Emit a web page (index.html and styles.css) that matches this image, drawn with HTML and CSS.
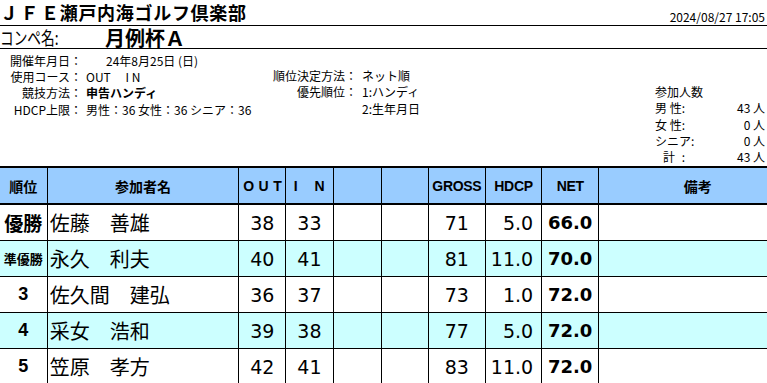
FILE: index.html
```html
<!DOCTYPE html>
<html lang="ja">
<head>
<meta charset="utf-8">
<title>JFE瀬戸内海ゴルフ倶楽部 月例杯A</title>
<link rel="stylesheet" href="styles.css">
</head>
<body>
<header class="title-row">
  <h1 class="club"><span class="wide">ＪＦ</span>Ｅ瀬戸内海ゴルフ倶楽部</h1>
  <div class="stamp">2024/08/27 17:05</div>
</header>
<div class="compe-row">
  <div class="compe-label"><span class="squeeze">コンペ名:</span></div>
  <div class="compe-name">月例杯Ａ</div>
</div>
<section class="info">
  <div class="info-left">
    <div class="line"><span class="lab">開催年月日：</span><span class="val date">24年8月25日 (日)</span></div>
    <div class="line"><span class="lab">使用コース：</span><span class="val">OUT　 I N</span></div>
    <div class="line"><span class="lab">競技方法：</span><span class="val strong">申告ハンディ</span></div>
    <div class="line"><span class="lab">HDCP上限：</span><span class="val">男性：36 女性：36 シニア：36</span></div>
  </div>
  <div class="info-mid">
    <div class="line"><span class="lab">順位決定方法：</span><span class="val">ネット順</span></div>
    <div class="line"><span class="lab">優先順位：</span><span class="val">1:ハンディ</span></div>
    <div class="line"><span class="lab"></span><span class="val">2:生年月日</span></div>
  </div>
  <div class="info-right">
    <div class="line">参加人数</div>
    <div class="line cnt"><span class="clab">男 性:</span><span class="num">43 人</span></div>
    <div class="line cnt"><span class="clab">女 性:</span><span class="num">0 人</span></div>
    <div class="line cnt"><span class="clab">シニア:</span><span class="num">0 人</span></div>
    <div class="line cnt"><span class="clab total">計 <span class="tcolon">:</span></span><span class="num">43 人</span></div>
  </div>
</section>
<table class="results">
  <colgroup>
    <col class="c-rank"><col class="c-name"><col class="c-sc"><col class="c-sc"><col class="c-blank1"><col class="c-sc">
    <col class="c-gross"><col class="c-hdcp"><col class="c-net"><col class="c-note">
  </colgroup>
  <thead>
    <tr>
      <th class="first">順位</th>
      <th>参加者名</th>
      <th class="lat out">OUT</th>
      <th class="lat in">I N</th>
      <th></th>
      <th></th>
      <th class="lat">GROSS</th>
      <th class="lat">HDCP</th>
      <th class="lat">NET</th>
      <th>備考</th>
    </tr>
  </thead>
  <tbody>
    <tr>
      <td class="first rank jp">優勝</td><td class="name">佐藤　善雄</td>
      <td class="n">38</td><td class="n">33</td><td></td><td></td>
      <td class="n">71</td><td class="n r">5.0</td><td class="n net">66.0</td><td></td>
    </tr>
    <tr class="alt">
      <td class="first rank jp small">準優勝</td><td class="name">永久　利夫</td>
      <td class="n">40</td><td class="n">41</td><td></td><td></td>
      <td class="n">81</td><td class="n r">11.0</td><td class="n net">70.0</td><td></td>
    </tr>
    <tr>
      <td class="first rank">3</td><td class="name">佐久間　建弘</td>
      <td class="n">36</td><td class="n">37</td><td></td><td></td>
      <td class="n">73</td><td class="n r">1.0</td><td class="n net">72.0</td><td></td>
    </tr>
    <tr class="alt">
      <td class="first rank">4</td><td class="name">采女　浩和</td>
      <td class="n">39</td><td class="n">38</td><td></td><td></td>
      <td class="n">77</td><td class="n r">5.0</td><td class="n net">72.0</td><td></td>
    </tr>
    <tr>
      <td class="first rank">5</td><td class="name">笠原　孝方</td>
      <td class="n">42</td><td class="n">41</td><td></td><td></td>
      <td class="n">83</td><td class="n r">11.0</td><td class="n net">72.0</td><td></td>
    </tr>
  </tbody>
</table>
</body>
</html>
```
FILE: styles.css
```css
html, body {
  margin: 0;
  padding: 0;
  overflow: hidden;
  background: #ffffff;
  color: #000000;
  font-family: "Noto Sans CJK JP", "Noto Sans", sans-serif;
}

.title-row {
  height: 25px;
  border-bottom: 1px solid #000;
  display: flex;
  justify-content: space-between;
  align-items: flex-end;
}

.club {
  margin: 0;
  padding-top: 1px;
  font-size: 18px;
  line-height: 23.5px;
  font-weight: 700;
  letter-spacing: 0.7px;
  align-self: flex-start;
}

.club .wide {
  letter-spacing: 2.5px;
}

.stamp {
  font-size: 12px;
  line-height: 14px;
  padding-right: 2px;
  padding-bottom: 1px;
}

.compe-row {
  height: 22px;
  border-bottom: 1px solid #000;
  display: flex;
  align-items: flex-start;
}

.compe-label {
  width: 105px;
  flex: none;
  font-size: 18px;
  line-height: 22px;
}

.squeeze {
  display: inline-block;
  transform: scaleX(0.76);
  transform-origin: left center;
  white-space: nowrap;
}

.compe-name {
  font-size: 20px;
  line-height: 23px;
  font-weight: 700;
}

.info {
  height: 117px;
  display: flex;
  font-size: 12px;
  line-height: 16.4px;
}

.line {
  height: 16.4px;
  display: flex;
  white-space: pre;
}

.info-left {
  width: 262px;
  flex: none;
  padding-top: 3.5px;
}

.info-left .lab {
  width: 82px;
  text-align: right;
  flex: none;
}

.info-left .val {
  padding-left: 4px;
}

.info-left .val.date {
  padding-left: 24px;
}

.strong {
  font-weight: 700;
}

.info-mid {
  flex: none;
  padding-top: 18.8px;
}

.info-mid .lab {
  width: 95px;
  text-align: right;
  flex: none;
}

.info-mid .val {
  padding-left: 5px;
}

.info-right {
  margin-left: auto;
  width: 110px;
  padding-right: 2px;
  padding-top: 34.8px;
}

.cnt {
  justify-content: space-between;
}

.clab.total {
  padding-left: 8px;
}

.tcolon {
  padding-left: 4px;
}

.results {
  border-collapse: collapse;
  table-layout: fixed;
  width: 797px;
  border-top: 2px solid #000;
}

.c-rank { width: 47px; }
.c-name { width: 191px; }
.c-sc { width: 47px; }
.c-blank1 { width: 48px; }
.c-gross { width: 57px; }
.c-hdcp { width: 56px; }
.c-net { width: 57px; }
.c-note { width: 197px; }

.results th,
.results td {
  border: 1px solid #000;
  padding: 0;
  height: 35px;
  white-space: nowrap;
  overflow: hidden;
}

.results .first {
  border-left: none;
}

.results thead th {
  background: #99ccff;
  font-size: 14px;
  font-weight: 700;
  text-align: center;
  border-bottom: 2px solid #000;
  border-top: 2px solid #000;
}

.results th.lat {
  font-family: "Liberation Sans", "Noto Sans CJK JP", sans-serif;
  font-size: 14px;
  letter-spacing: -0.3px;
}

.results th.out {
  letter-spacing: 4.5px;
  padding-left: 4px;
  font-size: 14px;
}

.results th.in {
  letter-spacing: 6.5px;
  padding-left: 6px;
  font-size: 14px;
}

.results tbody tr.alt td {
  background: #ccffff;
}

.rank {
  text-align: center;
  font-family: "Liberation Sans", "Noto Sans CJK JP", sans-serif;
  font-weight: 700;
  font-size: 18px;
}

.rank.jp {
  font-family: "Noto Sans CJK JP", sans-serif;
  font-size: 19px;
  letter-spacing: 0;
}

.rank.small {
  font-size: 13px;
  letter-spacing: 0;
}

.name {
  font-size: 20px;
  padding-left: 2px !important;
  text-align: left;
}

.n {
  font-family: "DejaVu Sans", "Noto Sans", sans-serif;
  font-size: 19px;
  text-align: center;
}

.n.r {
  text-align: right;
  padding-right: 8px !important;
}

.n.net {
  text-align: right;
  font-weight: 700;
  font-size: 18px;
  padding-right: 6px !important;
}
```
